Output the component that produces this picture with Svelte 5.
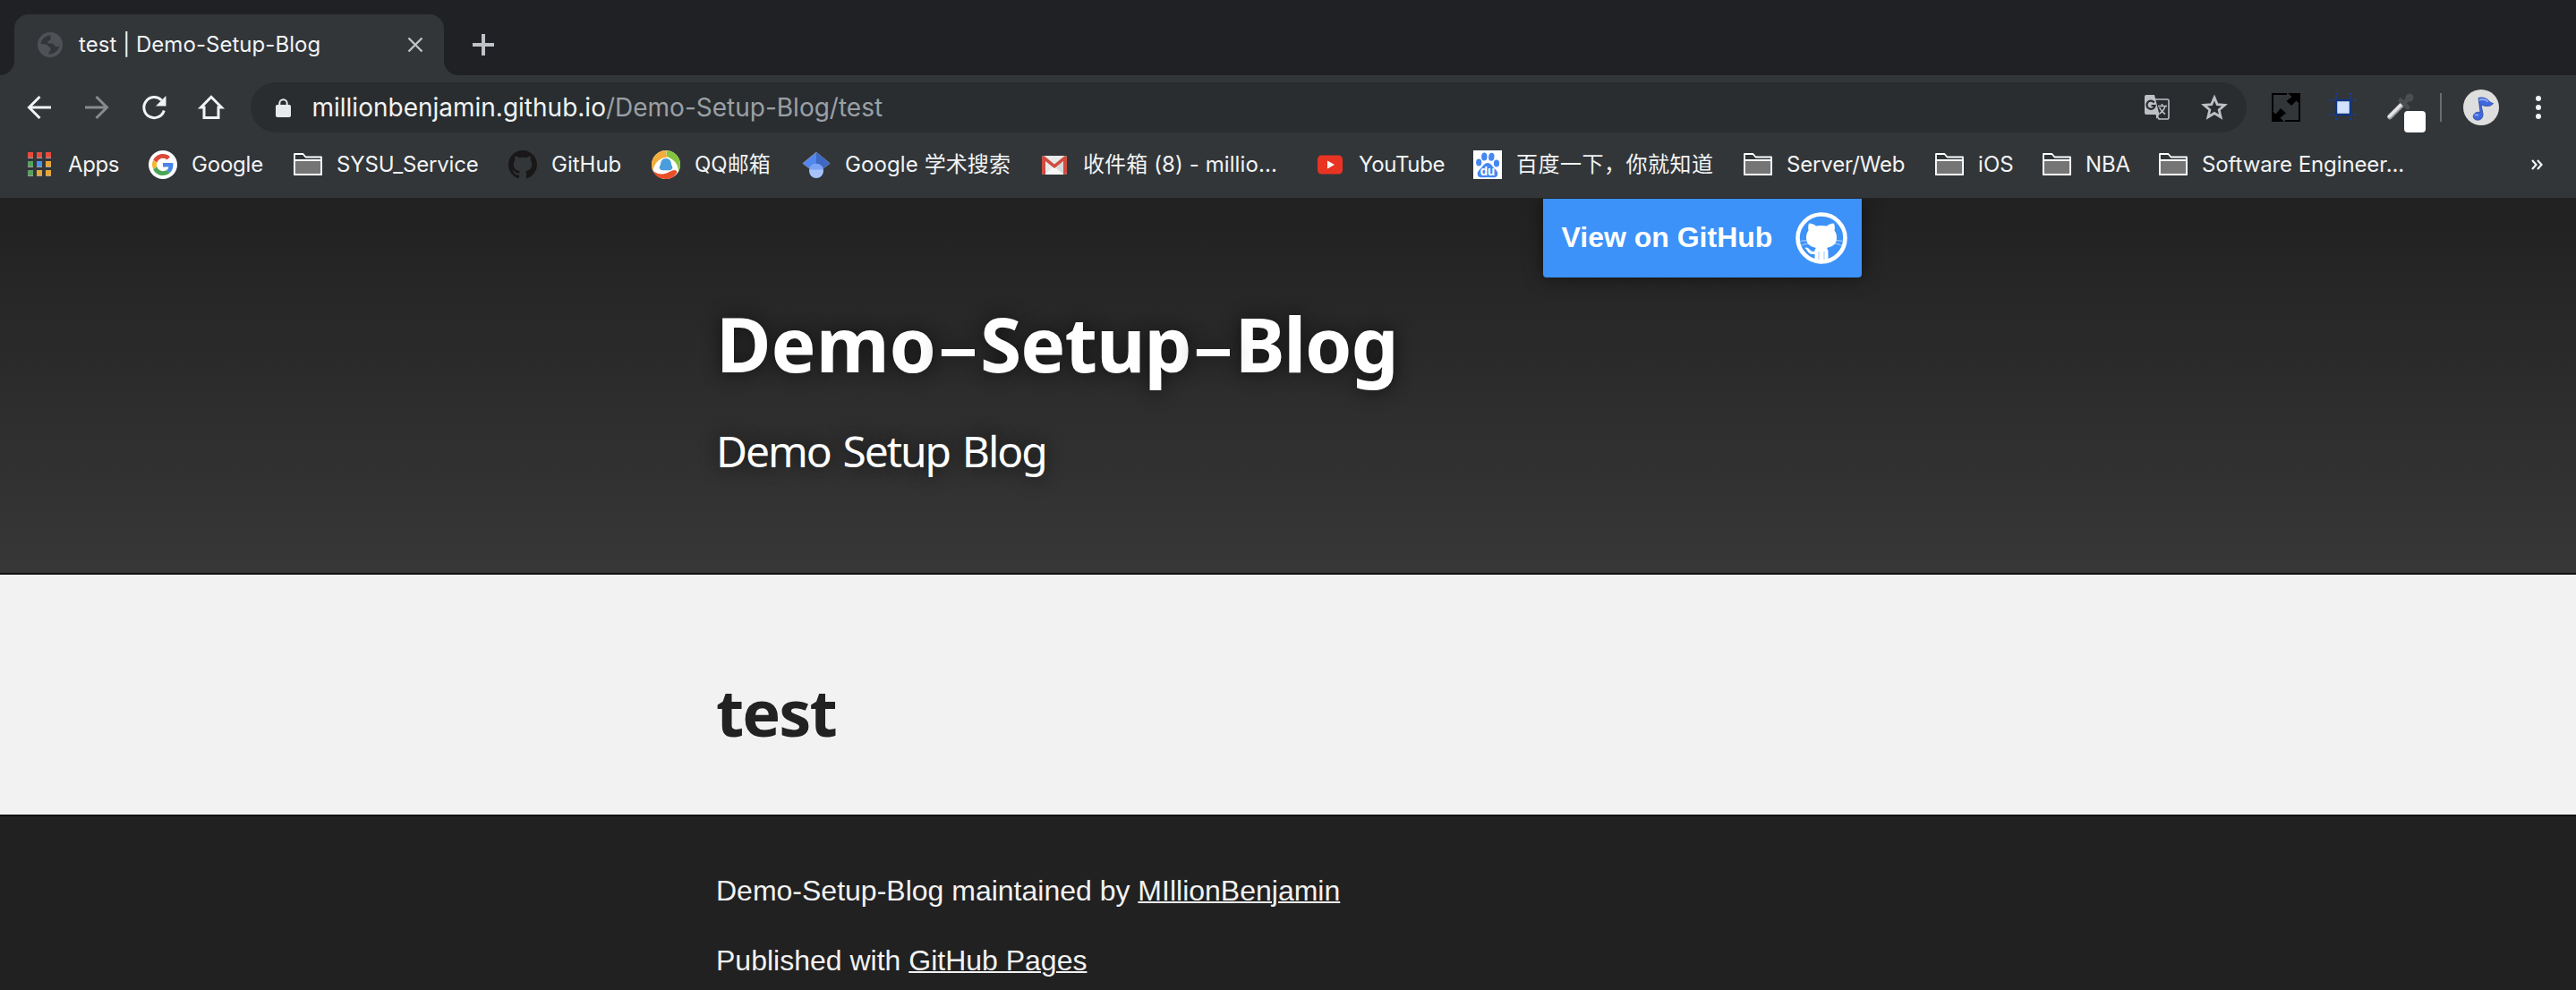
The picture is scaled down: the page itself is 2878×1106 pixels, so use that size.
<script>
  const bookmarks = [
    { icon: 'apps', label: 'Apps', width: 138, track: -0.4 },
    { icon: 'google', label: 'Google', width: 162, track: -0.2 },
    { icon: 'folder', label: 'SYSU_Service', width: 240, track: -0.15 },
    { icon: 'github', label: 'GitHub', width: 160, track: 0 },
    { icon: 'qq', label: 'QQ邮箱', width: 168, track: 0 },
    { icon: 'scholar', label: 'Google 学术搜索', width: 266, track: 0.1 },
    { icon: 'gmail', label: '收件箱 (8) - millio...', width: 308, track: 0.1 },
    { icon: 'youtube', label: 'YouTube', width: 176, track: -0.3 },
    { icon: 'baidu', label: '百度一下，你就知道', width: 302, track: 0.5 },
    { icon: 'folder', label: 'Server/Web', width: 214, track: -0.15 },
    { icon: 'folder', label: 'iOS', width: 120, track: 0.1 },
    { icon: 'folder', label: 'NBA', width: 130, track: -0.2 },
    { icon: 'folder', label: 'Software Engineer...', width: 300, track: -0.1 }
  ];

  const appColors = [
    '#e74b3c', '#e74b3c', '#e74b3c',
    '#57a05f', '#4a90f0', '#e8a637',
    '#57a05f', '#e8a637', '#e8a637'
  ];
</script>

{#snippet bookmarkIcon(name)}
  <svg class="icon" viewBox="0 0 32 32">
    {#if name === 'apps'}
      {#each appColors as color, i}
        <rect x={3 + (i % 3) * 10} y={2 + Math.floor(i / 3) * 10} width="6" height="7" fill="#a3a19c" />
        <rect x={3 + (i % 3) * 10} y={2 + Math.floor(i / 3) * 10} width="6" height="6" fill={color} />
      {/each}
    {:else if name === 'google'}
      <circle cx="16" cy="16" r="16" fill="#fff" />
      <g transform="translate(4 4) scale(.5)">
        <path fill="#db4a39" d="M24 9.5c3.54 0 6.71 1.22 9.21 3.6l6.85-6.85C35.9 2.38 30.47 0 24 0 14.62 0 6.51 5.38 2.56 13.22l7.98 6.19C12.43 13.72 17.74 9.5 24 9.5z" />
        <path fill="#4a86e8" d="M46.98 24.55c0-1.57-.15-3.09-.38-4.55H24v9.02h12.94c-.58 2.96-2.26 5.48-4.78 7.18l7.73 6c4.51-4.18 7.09-10.36 7.09-17.65z" />
        <path fill="#f3b72f" d="M10.53 28.59A14.5 14.5 0 0 1 9.77 24c0-1.6.27-3.14.76-4.59l-7.98-6.19A23.9 23.9 0 0 0 0 24c0 3.88.92 7.54 2.56 10.78l7.97-6.19z" />
        <path fill="#4ca456" d="M24 48c6.48 0 11.93-2.13 15.89-5.81l-7.73-6c-2.15 1.45-4.92 2.3-8.16 2.3-6.26 0-11.57-4.22-13.47-9.91l-7.98 6.19C6.51 42.62 14.62 48 24 48z" />
      </g>
    {:else if name === 'folder'}
      <path d="M1 4h9.5l3 3.5H31V27H1z" fill="#323639" stroke="#fff" stroke-width="1.8" stroke-linejoin="round" />
      <path d="M1 11h30v16H1z" fill="#757576" stroke="#fff" stroke-width="1.8" stroke-linejoin="round" />
    {:else if name === 'github'}
      <path transform="scale(2)" fill="#191717" fill-rule="evenodd" d="M8 0C3.58 0 0 3.58 0 8c0 3.54 2.29 6.53 5.47 7.59.4.07.55-.17.55-.38 0-.19-.01-.82-.01-1.49-2.01.37-2.53-.49-2.69-.94-.09-.23-.48-.94-.82-1.13-.28-.15-.68-.52-.01-.53.63-.01 1.08.58 1.23.82.72 1.21 1.87.87 2.33.66.07-.52.28-.87.51-1.07-1.78-.2-3.64-.89-3.64-3.95 0-.87.31-1.59.82-2.15-.08-.2-.36-1.02.08-2.12 0 0 .67-.21 2.2.82.64-.18 1.32-.27 2-.27s1.36.09 2 .27c1.53-1.04 2.2-.82 2.2-.82.44 1.1.16 1.92.08 2.12.51.56.82 1.27.82 2.15 0 3.07-1.87 3.75-3.65 3.95.29.25.54.73.54 1.48 0 1.07-.01 1.93-.01 2.2 0 .21.15.46.55.38A8.01 8.01 0 0 0 16 8c0-4.42-3.58-8-8-8z" />
    {:else if name === 'qq'}
      <circle cx="16" cy="16" r="16" fill="#fff" />
      <path d="M17 0C7 0 0 7 0 16c0 3 .5 5 1.500 7C3 14 8 8.500 18.500 7.500c-2.500-2.500-3-5-1.500-7.500z" fill="#f1ae3a" />
      <path d="M17.500 0C26 1 32 7.500 32 16c0 3-.8 5.500-2 8C30 16 26 11 18.500 7.500c-2.500-2.500-2.500-5-1-7.500z" fill="#86c440" />
      <path d="M1.500 23C8 27.500 14 27.500 20 24c4-2.500 7.500-3 8.500.5C25.500 29.500 22 32 16 32c-6.500 0-11.500-3-14.500-9z" fill="#e94f2a" />
      <path d="M16 9c4 0 6 3 6 7 1 1 2 4 .8 5-.5 0-1-.6-1.300-1 0 1 2 2-1.500 2.200h-8C8.500 22 10.500 21 10.500 20c-.4.6-.9 1-1.300 1C8 20 9 17 10 16c0-4 2-7 6-7z" fill="#4a9ddb" />
    {:else if name === 'scholar'}
      <path d="M16 2 .8 14.500 8 20l8-5 8 5 7.200-5.500z" fill="#5287ee" stroke="#b3a59b" stroke-width=".6" />
      <path d="M16 2v13l8 5 7.200-5.500z" fill="#3f68c2" />
      <circle cx="16" cy="23" r="8" fill="#a6c3fb" />
      <path d="M8 21.500a8.200 8.200 0 0 1 16 0z" fill="#7ba3f5" />
    {:else if name === 'gmail'}
      <rect x="2" y="6" width="28" height="21" rx="2" fill="#e9e9e9" />
      <path d="M5 27 16 17l11 10z" fill="#f7f7f7" />
      <path d="M27 27V12L16 19z" fill="#cfcfcf" opacity=".6" />
      <path d="M2 8v17a2 2 0 0 0 2 2h2V12l10 8 10-8v15h2a2 2 0 0 0 2-2V8a2 2 0 0 0-3-1.600l-11 9-11-9A2 2 0 0 0 2 8z" fill="#d14b3f" />
    {:else if name === 'youtube'}
      <rect x="2" y="5.500" width="28" height="21" rx="4.500" fill="#e93323" />
      <path d="m13 11.500 8 4.500-8 4.500z" fill="#fff" />
    {:else if name === 'baidu'}
      <rect width="32" height="32" fill="#fff" />
      <g fill="#4688f1">
        <ellipse cx="12.300" cy="7" rx="3.200" ry="4.500" />
        <ellipse cx="20.300" cy="7.300" rx="3.200" ry="4.500" transform="rotate(8 20.300 7.300)" />
        <ellipse cx="6.200" cy="13.500" rx="3.100" ry="4" />
        <ellipse cx="26" cy="14.500" rx="3.100" ry="4" />
        <path d="M16 14c4 0 5 4 8 6.500 3 2.500 4 5 3 7.500-1.500 3.500-6 2-11 2s-9.500 1.500-11-2c-1-2.500 0-5 3-7.500C11 18 12 14 16 14z" />
      </g>
      <text class="paw" x="16" y="27.500" text-anchor="middle">du</text>
    {/if}
  </svg>
{/snippet}

<div class="page">
  <div class="tabs">
    <div class="tab">
      <svg class="globe" viewBox="0 0 28 28">
        <circle cx="14" cy="14" r="14" fill="#4e5155" />
        <path d="M14 3.500C8 4 4 8 3.500 13c3 0 5 .5 7 1 1.500.4 1.500 3 4 3v3c-1 1-2 2-2.500 4.500 6 .5 11-4 12.500-9-2 .5-4 1.500-5 0-1-1.300-1.500-3-4-3h-4V9.500c2 0 3-.5 3-2.500 0-1.500.500-3-.5-3.500z" fill="#323639" />
      </svg>
      <span class="tab-title">test | Demo-Setup-Blog</span>
      <svg class="close" viewBox="0 0 18 18"><path d="m1.500 1.500 15 15m0-15-15 15" /></svg>
    </div>
    <svg class="plus" viewBox="0 0 24 24"><path d="M12 0v24M0 12h24" /></svg>
  </div>

  <div class="toolbar">
    <div class="nav">
      <svg class="icon" viewBox="0 0 32 32"><path class="line" d="M29 16H5M16.500 4 4.500 16l12 12" /></svg>
      <svg class="icon dim" viewBox="0 0 32 32"><path class="line" d="M3 16h24M15.500 4l12 12-12 12" /></svg>
      <svg class="icon" viewBox="0 0 32 32">
        <path class="line" d="M27.300 19.500A11.500 11.500 0 1 1 24.500 8" />
        <path d="M29.500 3v11.500H18z" fill="#f1f3f4" />
      </svg>
      <svg class="icon" viewBox="0 0 32 32"><path class="line" d="M16 4.300 4.500 16H8v11.500h16V16h3.500z" /></svg>
    </div>
    <div class="omnibox">
      <svg class="lock" viewBox="0 0 17 21">
        <rect y="7" width="17" height="14" rx="2" fill="#e8eaed" />
        <path d="M4.300 8V5.500a4.200 4.200 0 0 1 8.400 0V8" fill="none" stroke="#e8eaed" stroke-width="2" />
      </svg>
      <span class="url">millionbenjamin.github.io<span class="path">/Demo-Setup-Blog/test</span></span>
      <svg class="translate" viewBox="0 0 28 28">
        <path d="M12 5h13.500a1.500 1.500 0 0 1 1.500 1.500v19a1.500 1.500 0 0 1-1.500 1.500H16l-3-5" fill="none" stroke="#bdc1c6" stroke-width="1.600" />
        <path d="M2 0h9l5.500 22H2a2 2 0 0 1-2-2V2a2 2 0 0 1 2-2z" fill="#bdc1c6" />
        <path d="M10.800 8.500A4.600 4.600 0 1 0 11.600 12H7.500" fill="none" stroke="#292d30" stroke-width="2.200" />
        <path d="M15 12.500h10M19.500 10v2.500M23 12.500c-1 4-4 7-6.500 8.500m0-7c1.500 3 4 6 6.500 7.500" fill="none" stroke="#bdc1c6" stroke-width="1.600" />
        <path d="m16.500 22-3.500 5v-5z" fill="#bdc1c6" />
      </svg>
      <svg class="star" viewBox="0 0 30 30">
        <path d="m15 4 3.200 7.600 8.300.7-6.300 5.400 1.900 8.100-7.100-4.300-7.100 4.300 1.900-8.100-6.300-5.400 8.300-.7z" fill="none" stroke="#bdc1c6" stroke-width="2.800" />
      </svg>
    </div>

    <svg class="icon resize" viewBox="0 0 32 32">
      <path d="M17 1H1v19M31 12v19H15" fill="none" stroke="#000" stroke-width="2" />
      <path d="M18 0h14v13l-4.500-4.500-5.500 5.500-5.500-5 6-5zM14 32H0V19l4.500 4.500L10 17l6 5.500-6.500 5z" />
    </svg>
    <svg class="icon region" viewBox="0 0 32 32">
      <path d="M8 0v32M24 0v32M0 8h32M0 24h32" fill="none" stroke="#173f96" stroke-width="2" stroke-dasharray="2 2" />
      <rect x="8" y="8" width="16" height="16" fill="#d3e3fd" stroke="#12357f" stroke-width="2.500" />
    </svg>
    <div class="picker">
      <svg viewBox="0 0 32 32">
        <path d="M17.500 13 4 26.500" stroke="#96989a" stroke-width="6" stroke-linecap="round" />
        <path d="M17 12.500 3.500 26" stroke="#e4e4e4" stroke-width="3.500" stroke-linecap="round" />
        <path d="m16 8 8 8M20 11l6-6" stroke="#4b4d4f" stroke-width="5" stroke-linecap="round" />
        <circle cx="26" cy="5" r="4.500" fill="#4b4d50" />
      </svg>
      <span class="swatch"></span>
    </div>
    <span class="divider"></span>
    <svg class="avatar" viewBox="0 0 40 40">
      <circle cx="20" cy="20" r="20" fill="#dedede" />
      <path d="M17 9.500c4-1 8-.5 11 2.500 1.500 1.800 3 2.800 5.500 3.500-2 3.500-8 4-13.500 1.500L22 27c.5 4-2 7-5.500 7.200-3.500 0-5.500-2-5.200-4.700.4-3 4-5 7.700-4z" fill="#4068dc" stroke="#27479f" stroke-width=".8" />
      <path d="M18.500 11.500c3-1 7 0 8.500 1.500" fill="none" stroke="#8caaf5" stroke-width="2" stroke-linecap="round" />
      <ellipse cx="15" cy="28.500" rx="2.500" ry="1.300" fill="#7fa0f3" />
    </svg>
    <svg class="icon menu" viewBox="0 0 32 32" fill="#f1f3f4">
      <circle cx="16" cy="6" r="3" /><circle cx="16" cy="16" r="3" /><circle cx="16" cy="26" r="3" />
    </svg>
  </div>

  <div class="bookmarks">
    {#each bookmarks as item}
      <div class="bookmark" style="width:{item.width}px">
        {@render bookmarkIcon(item.icon)}
        <span class="label" style="letter-spacing:{item.track}px">{item.label}</span>
      </div>
    {/each}
    <svg class="more" viewBox="0 0 13 12"><path d="m1 1 4.500 5L1 11M7 1l4.500 5L7 11" /></svg>
  </div>

  <header>
    <div class="inner">
      <a class="fork" href="#github">
        <span>View on GitHub</span>
        <svg viewBox="0 0 58 58">
          <circle cx="29" cy="29" r="26.500" fill="none" stroke="#fff" stroke-width="4.600" />
          <path d="M4 33c4-1.500 7-1.500 10-1M54 33c-4-1.500-7-1.500-10-1M5 38c4-2.500 7-3 10-3M53 38c-4-2.500-7-3-10-3" fill="none" stroke="#fff" stroke-opacity=".4" stroke-width="1.300" />
          <path d="M15 12.500c3 0 6 1.200 8 3 4-.8 8-.8 12 0 2-1.800 5-3 8-3 1 3 1 5.500.5 8 2 2.500 2.500 5 2.500 8 0 7-4 10-11 11.500 1.200 1.500 1.500 3 1.500 5V54h-15v-7c-5 .5-7-1.500-8.500-4-.8-1.500-1.500-2.500-3-3 3-1.500 5 .5 6.500 2.500 1.500 1.500 3 1.500 5 1 0-1.500.5-2.500 1.500-3.500C16 38.500 12 35.500 12 28.500c0-3 .5-5.500 2.500-8-.5-2.500-.5-5 .5-8z" fill="#fff" />
          <path d="M26 44v9M32 44v9" stroke="#3c92f8" stroke-opacity=".4" stroke-width="1.200" />
        </svg>
      </a>
      <h1>Demo<span class="dash">-</span><span class="second">Setup</span><span class="dash">-</span><span class="third">Blog</span></h1>
      <h2>Demo Setup Blog</h2>
    </div>
  </header>

  <main><div class="inner"><h1>test</h1></div></main>

  <footer>
    <div class="inner">
      <p>Demo-Setup-Blog maintained by <a href="#author">MIllionBenjamin</a></p>
      <p>Published with <a href="#pages">GitHub Pages</a></p>
    </div>
  </footer>
</div>

<style>
  :global(body) { margin: 0; background: #212121; }
  .page {
    width: 2878px;
    height: 1106px;
    overflow: hidden;
    display: flex;
    flex-direction: column;
    font-family: Inter, "Noto Sans CJK SC", sans-serif;
    color: #f1f3f4;
  }
  .page > * { flex: none; }
  svg { display: block; flex: none; }
  .icon { width: 32px; height: 32px; }

  .tabs {
    box-sizing: border-box;
    height: 84px;
    padding: 16px 16px 0;
    display: flex;
    align-items: center;
    background: #202124;
  }
  .tab {
    position: relative;
    box-sizing: border-box;
    width: 480px;
    height: 68px;
    padding: 0 23px 0 26px;
    display: flex;
    align-items: center;
    background: #323639;
    border-radius: 16px 16px 0 0;
  }
  .tab::before, .tab::after {
    content: "";
    position: absolute;
    bottom: 0;
    width: 16px;
    height: 16px;
  }
  .tab::before { left: -16px; background: radial-gradient(circle at 0 0, transparent 15.5px, #323639 16.5px); }
  .tab::after { right: -16px; background: radial-gradient(circle at 100% 0, transparent 15.5px, #323639 16.5px); }
  .globe { width: 28px; height: 28px; }
  .tab-title { flex: 1; margin-left: 18px; font-size: 24px; line-height: 32px; letter-spacing: .05px; white-space: pre; }
  .close { width: 18px; height: 18px; stroke: #c0c3c6; stroke-width: 2.4; }
  .plus { width: 24px; height: 24px; margin-left: 32px; stroke: #bfc2c6; stroke-width: 4; }

  .toolbar {
    box-sizing: border-box;
    height: 72px;
    padding-left: 28px;
    display: flex;
    align-items: center;
    background: #323639;
  }
  .nav { display: flex; gap: 32px; }
  .line { fill: none; stroke: #f1f3f4; stroke-width: 3; }
  .dim { opacity: .45; }
  .omnibox {
    box-sizing: border-box;
    width: 2230px;
    height: 56px;
    margin-left: 28px;
    padding: 0 21px 0 28px;
    display: flex;
    align-items: center;
    background: #292d30;
    border-radius: 28px;
  }
  .lock { width: 17px; height: 21px; }
  .url { flex: 1; margin-left: 23.5px; font-size: 28px; line-height: 40px; }
  .path { color: #9aa0a6; }
  .translate { width: 28px; height: 28px; }
  .star { width: 30px; height: 30px; margin-left: 35px; }
  .resize { margin-left: 28px; }
  .region { margin-left: 32px; }
  .picker { position: relative; width: 32px; height: 32px; margin-left: 32px; }
  .swatch {
    position: absolute;
    left: 20px;
    top: 20px;
    width: 24px;
    height: 24px;
    border-radius: 4px;
    background: #fff;
  }
  .divider { width: 2px; height: 32px; margin-left: 28px; background: #6a6d70; }
  .avatar { width: 40px; height: 40px; margin-left: 24px; }
  .menu { margin-left: 28px; }

  .bookmarks {
    box-sizing: border-box;
    height: 66px;
    padding: 0 0 9px 28px;
    display: flex;
    align-items: center;
    background: #323639;
    border-bottom: 1px solid #232326;
  }
  .bookmark { flex: none; display: flex; align-items: center; gap: 16px; }
  .label { font-size: 24px; line-height: 32px; margin-top: -1px; white-space: nowrap; }
  .paw { font: bold 13px Inter, sans-serif; fill: #fff; }
  .more { width: 13px; height: 12px; margin-left: 116px; fill: none; stroke: #f1f3f4; stroke-width: 2.2; }

  .inner { position: relative; width: 1280px; margin-left: 800px; }
  h1, h2, p { margin: 0; }
  header {
    box-sizing: border-box;
    height: 420px;
    padding-top: 120px;
    background: linear-gradient(#212121, #373737);
    border-bottom: 2px solid #111;
  }
  header h1, header h2, main h1 { font-family: "Noto Sans", "Open Sans", sans-serif; }
  header h1 {
    font-size: 84px;
    line-height: 84px;
    color: #fff;
    text-shadow: 0 0 20px #111;
    white-space: nowrap;
  }
  .second { letter-spacing: -1px; }
  .third { letter-spacing: -1.2px; }
  .dash {
    display: inline-block;
    width: 49px;
    text-align: center;
    font-family: "Open Sans", sans-serif;
    font-weight: 600;
    transform: scaleX(1.75);
  }
  header h2 {
    margin-top: 54px;
    font-size: 48px;
    line-height: 48px;
    font-weight: 400;
    letter-spacing: -2.1px;
    word-spacing: 3.5px;
    color: #fff;
    text-shadow: 0 0 20px #111;
  }
  .fork {
    position: absolute;
    top: -120px;
    right: 0;
    box-sizing: border-box;
    width: 356px;
    height: 88px;
    padding: 0 16px 0 20.5px;
    display: flex;
    align-items: center;
    justify-content: space-between;
    background: #3c92f8;
    border-radius: 0 0 4px 4px;
    box-shadow: 0 0 20px rgba(0, 0, 0, .5);
    clip-path: inset(0 -40px -40px -40px);
    color: #fff;
    font: bold 32px "Liberation Sans", Arial, sans-serif;
    text-decoration: none;
  }
  .fork span { margin-top: -2px; }
  .fork svg { width: 58px; height: 58px; }

  main { box-sizing: border-box; height: 268px; padding-top: 117px; background: #f2f2f2; }
  main h1 { font-size: 72px; line-height: 72px; letter-spacing: -2px; color: #222; }

  footer {
    box-sizing: border-box;
    height: 196px;
    padding-top: 60px;
    background: #212121;
    border-top: 2px solid #111;
    font: 32px "Liberation Sans", Arial, sans-serif;
    color: #f2f2f2;
  }
  footer p { line-height: 46px; margin-bottom: 32px; }
  footer a { color: inherit; text-decoration: underline; text-decoration-thickness: 2px; }
</style>
